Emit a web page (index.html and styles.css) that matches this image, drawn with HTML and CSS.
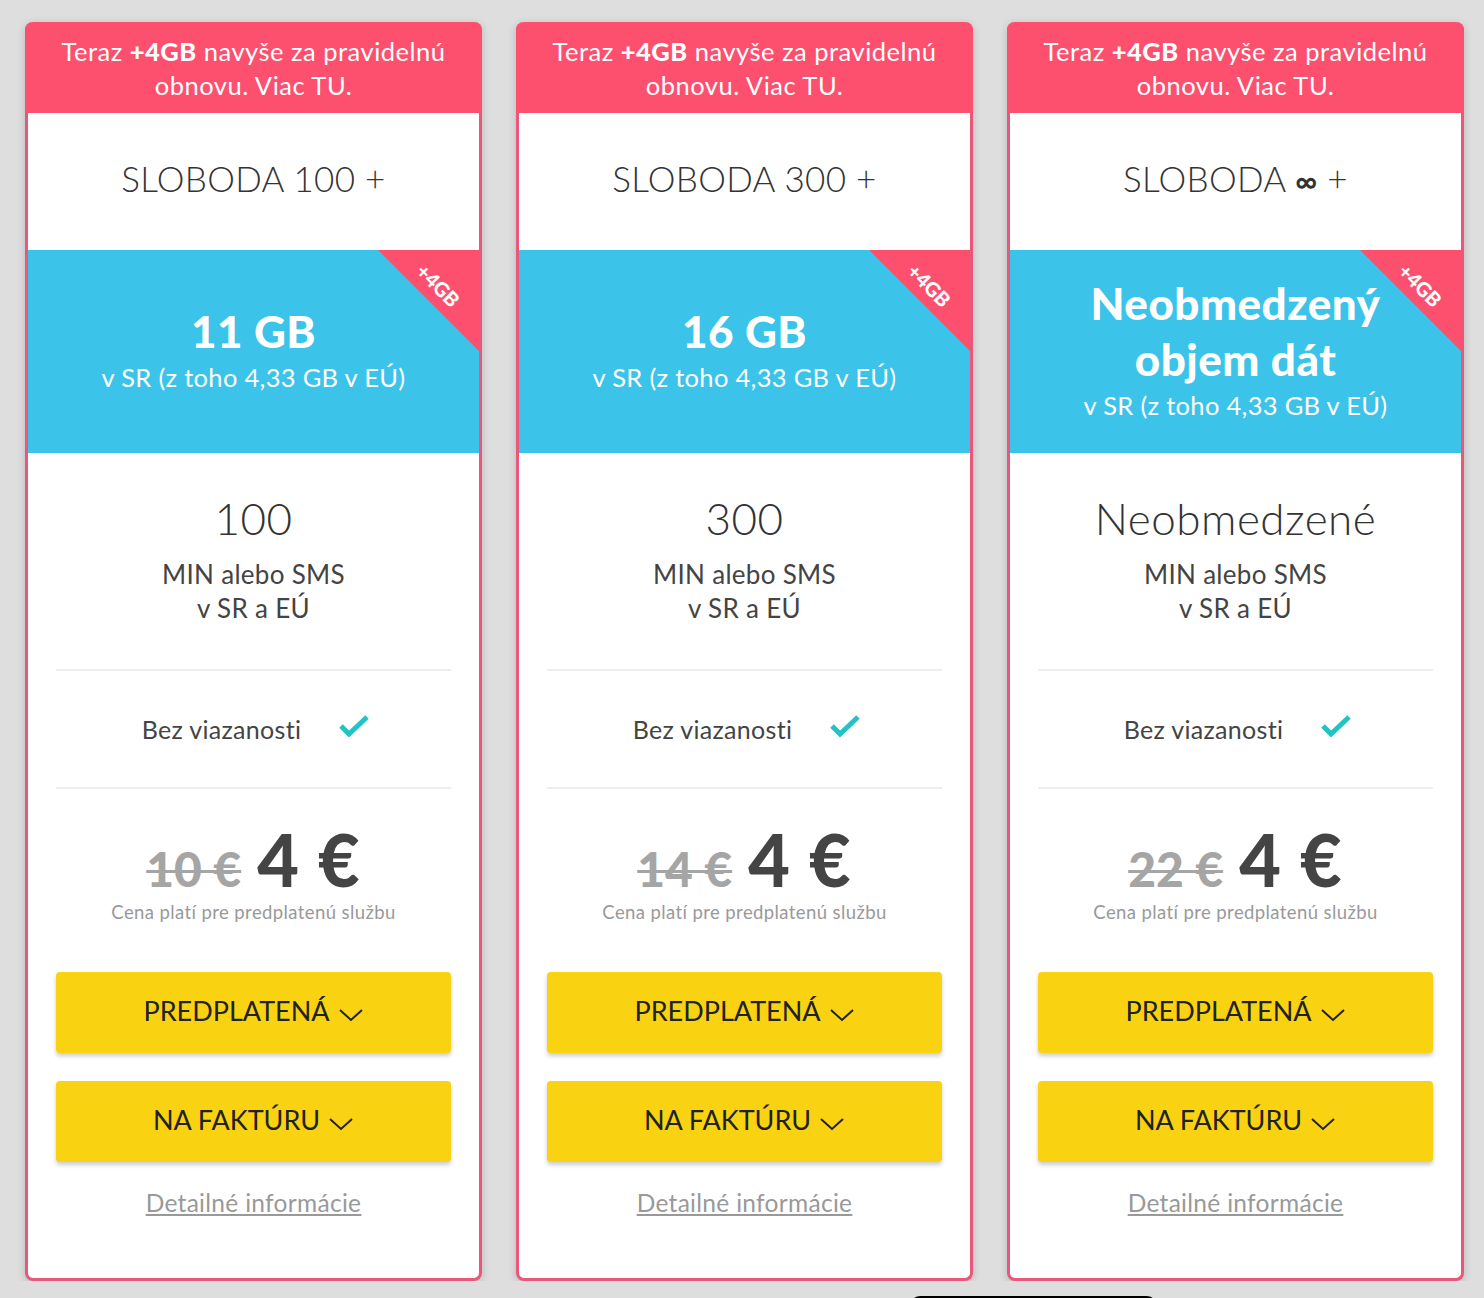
FILE: index.html
```html
<!DOCTYPE html>
<html lang="sk">
<head>
  <meta charset="UTF-8">
  <title>Sloboda paušály</title>
  <link rel="stylesheet" href="styles.css">
</head>
<body>

  <div class="plans">

    <div class="plan">
      <div class="promo">Teraz <b>+4GB</b> navyše za pravidelnú<br>obnovu. Viac TU.</div>
      <div class="plan-name">SLOBODA 100 +</div>
      <div class="data">
        <div class="corner"><span>+4GB</span></div>
        <div class="data-amount">11 GB</div>
        <div class="data-note">v SR (z toho 4,33 GB v EÚ)</div>
      </div>
      <div class="minutes">
        <div class="minutes-count">100</div>
        <div class="minutes-note">MIN alebo SMS<br>v SR a EÚ</div>
      </div>
      <div class="feature">
        Bez viazanosti
        <svg class="check" width="34" height="26" viewBox="0 0 34 26"><polyline points="4,12 12,20 30,3" fill="none" stroke="#22c3c4" stroke-width="5"/></svg>
      </div>
      <div class="price">
        <div class="price-row"><s class="old">10 €</s><span class="now">4 €</span></div>
        <div class="price-note">Cena platí pre predplatenú službu</div>
      </div>
      <button class="btn">PREDPLATENÁ <svg width="26" height="14" viewBox="0 0 26 14"><polyline points="2,2 13,12 24,2" fill="none" stroke="#222" stroke-width="2"/></svg></button>
      <button class="btn">NA FAKTÚRU <svg width="26" height="14" viewBox="0 0 26 14"><polyline points="2,2 13,12 24,2" fill="none" stroke="#222" stroke-width="2"/></svg></button>
      <a class="details" href="#">Detailné informácie</a>
    </div>

    <div class="plan">
      <div class="promo">Teraz <b>+4GB</b> navyše za pravidelnú<br>obnovu. Viac TU.</div>
      <div class="plan-name">SLOBODA 300 +</div>
      <div class="data">
        <div class="corner"><span>+4GB</span></div>
        <div class="data-amount">16 GB</div>
        <div class="data-note">v SR (z toho 4,33 GB v EÚ)</div>
      </div>
      <div class="minutes">
        <div class="minutes-count">300</div>
        <div class="minutes-note">MIN alebo SMS<br>v SR a EÚ</div>
      </div>
      <div class="feature">
        Bez viazanosti
        <svg class="check" width="34" height="26" viewBox="0 0 34 26"><polyline points="4,12 12,20 30,3" fill="none" stroke="#22c3c4" stroke-width="5"/></svg>
      </div>
      <div class="price">
        <div class="price-row"><s class="old">14 €</s><span class="now">4 €</span></div>
        <div class="price-note">Cena platí pre predplatenú službu</div>
      </div>
      <button class="btn">PREDPLATENÁ <svg width="26" height="14" viewBox="0 0 26 14"><polyline points="2,2 13,12 24,2" fill="none" stroke="#222" stroke-width="2"/></svg></button>
      <button class="btn">NA FAKTÚRU <svg width="26" height="14" viewBox="0 0 26 14"><polyline points="2,2 13,12 24,2" fill="none" stroke="#222" stroke-width="2"/></svg></button>
      <a class="details" href="#">Detailné informácie</a>
    </div>

    <div class="plan">
      <div class="promo">Teraz <b>+4GB</b> navyše za pravidelnú<br>obnovu. Viac TU.</div>
      <div class="plan-name">SLOBODA <span class="inf">∞</span> +</div>
      <div class="data">
        <div class="corner"><span>+4GB</span></div>
        <div class="data-amount">Neobmedzený<br>objem dát</div>
        <div class="data-note">v SR (z toho 4,33 GB v EÚ)</div>
      </div>
      <div class="minutes">
        <div class="minutes-count">Neobmedzené</div>
        <div class="minutes-note">MIN alebo SMS<br>v SR a EÚ</div>
      </div>
      <div class="feature">
        Bez viazanosti
        <svg class="check" width="34" height="26" viewBox="0 0 34 26"><polyline points="4,12 12,20 30,3" fill="none" stroke="#22c3c4" stroke-width="5"/></svg>
      </div>
      <div class="price">
        <div class="price-row"><s class="old">22 €</s><span class="now">4 €</span></div>
        <div class="price-note">Cena platí pre predplatenú službu</div>
      </div>
      <button class="btn">PREDPLATENÁ <svg width="26" height="14" viewBox="0 0 26 14"><polyline points="2,2 13,12 24,2" fill="none" stroke="#222" stroke-width="2"/></svg></button>
      <button class="btn">NA FAKTÚRU <svg width="26" height="14" viewBox="0 0 26 14"><polyline points="2,2 13,12 24,2" fill="none" stroke="#222" stroke-width="2"/></svg></button>
      <a class="details" href="#">Detailné informácie</a>
    </div>

  </div>

  <div class="dock"></div>

</body>
</html>
```

FILE: styles.css
```css
body {
  margin: 0;
  background-color: #dedede;
  font-family: Lato, "Noto Sans", sans-serif;
  color: #444;
}
.plans {
  display: flex;
  gap: 34px;
  padding: 22px 20px 0 25px;
  align-items: flex-start;
}
.plan {
  width: 451px;
  flex: none;
  background: #fff;
  border: 3px solid #e9587a;
  border-top: 0;
  border-radius: 8px;
  box-shadow: 0 2px 8px rgba(0, 0, 0, 0.18);
  display: flex;
  flex-direction: column;
  align-items: center;
  text-align: center;
  padding-bottom: 60px;
}
.promo {
  align-self: stretch;
  margin: 0 -3px;
  height: 91px;
  box-sizing: border-box;
  padding: 12px 20px 0;
  background: #fd4f6e;
  border-radius: 8px 8px 0 0;
  color: #fff;
  font-size: 25.5px;
  letter-spacing: 0.5px;
  line-height: 34px;
}
.promo b {
  font-weight: 900;
}
.plan-name {
  height: 137px;
  line-height: 130px;
  font-size: 35px;
  font-weight: 300;
  letter-spacing: 0.3px;
  color: #333;
}
.plan-name .inf {
  font-weight: 700;
  font-size: 30px;
}
.data {
  position: relative;
  align-self: stretch;
  height: 203px;
  overflow: hidden;
  background: #3bc3e9;
  color: #fff;
  display: flex;
  flex-direction: column;
  justify-content: center;
  padding-bottom: 6px;
  box-sizing: border-box;
}
.corner {
  position: absolute;
  top: 0;
  right: 0;
  width: 101px;
  height: 101px;
  background: #fd4f6e;
  clip-path: polygon(0 0, 100% 0, 100% 100%);
}
.corner span {
  position: absolute;
  left: 35px;
  top: 23px;
  transform: rotate(45deg);
  font-size: 20px;
  font-weight: 900;
  color: #fff;
}
.data-amount {
  font-size: 44px;
  font-weight: 900;
  letter-spacing: 0.5px;
  line-height: 56px;
}
.data-note {
  font-size: 25.5px;
  letter-spacing: 0.3px;
  line-height: 36px;
}
.minutes {
  padding: 40px 0 44px;
}
.minutes-count {
  font-size: 44px;
  font-weight: 300;
  letter-spacing: 0.5px;
  line-height: 50px;
  color: #333;
}
.minutes-note {
  margin-top: 14px;
  font-size: 26px;
  letter-spacing: 0.3px;
  line-height: 34px;
  color: #444;
}
.feature {
  align-self: stretch;
  margin: 0 28px;
  height: 116px;
  border-top: 2px solid #eee;
  border-bottom: 2px solid #eee;
  display: flex;
  align-items: center;
  justify-content: center;
  gap: 36px;
  font-size: 25px;
  letter-spacing: 0.3px;
  padding-left: 6px;
}
.check {
  margin-top: -4px;
}
.price {
  padding-top: 30px;
}
.price-row {
  height: 80px;
  line-height: 80px;
}
.old {
  font-size: 48px;
  font-weight: 900;
  color: #a5a5a5;
  text-decoration-thickness: 3px;
  margin-right: 16px;
}
.now {
  font-size: 72px;
  font-weight: 900;
  letter-spacing: 1px;
  color: #444;
}
.price-note {
  margin-top: 1px;
  font-size: 18.5px;
  letter-spacing: 0.4px;
  line-height: 24px;
  color: #999;
}
.btn {
  align-self: stretch;
  margin: 48px 28px 0;
  height: 81px;
  border: 0;
  border-radius: 4px;
  background: #f9d212;
  box-shadow: 0 3px 4px rgba(0, 0, 0, 0.2);
  font-family: Lato, "Noto Sans", sans-serif;
  font-size: 27px;
  color: #222;
  display: flex;
  align-items: center;
  justify-content: center;
  gap: 8px;
  padding: 0 0 4px;
}
.btn + .btn {
  margin-top: 28px;
}
.btn svg {
  margin-top: 8px;
}
.details {
  margin-top: 26px;
  font-size: 24.5px;
  letter-spacing: 0.3px;
  line-height: 30px;
  color: #999;
}
.dock {
  position: fixed;
  left: 910px;
  top: 1296px;
  width: 247px;
  height: 20px;
  background: #000;
  border-radius: 10px;
}
```
